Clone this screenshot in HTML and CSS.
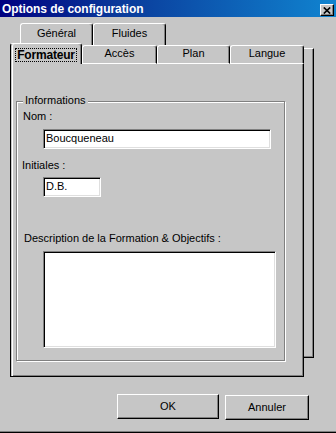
FILE: index.html
```html
<!DOCTYPE html>
<html lang="fr">
<head>
<meta charset="utf-8">
<title>Options de configuration</title>
<link rel="stylesheet" href="styles.css">
</head>
<body>
<div class="window">
  <div class="titlebar">
    <span class="title">Options de configuration</span>
    <span class="close"><svg width="8" height="7" viewBox="0 0 8 7"><path d="M0.8 0.5 L7.2 6.5 M7.2 0.5 L0.8 6.5" stroke="#000" stroke-width="1.7" fill="none"/></svg></span>
  </div>
  <div class="client">
    <div class="tabctl">
      <div class="backlayer">
        <div class="tabrow backrow">
          <div class="tab backtab">Général</div>
          <div class="tab backtab">Fluides</div>
        </div>
        <div class="backpanel"></div>
      </div>
      <div class="frontlayer">
        <div class="tabrow frontrow">
          <div class="tab seltab"><span class="focus">Formateur</span></div>
          <div class="tab fronttab w75">Accès</div>
          <div class="tab fronttab w73">Plan</div>
          <div class="tab fronttab w74">Langue</div>
        </div>
        <div class="panel">
          <div class="group">
            <div class="legend">Informations</div>
            <div class="label lbl-nom">Nom :</div>
            <div class="edit edit-nom">Boucqueneau</div>
            <div class="label lbl-ini">Initiales :</div>
            <div class="edit edit-ini">D.B.</div>
            <div class="label lbl-desc">Description de la Formation &amp; Objectifs :</div>
            <div class="edit edit-desc"></div>
          </div>
        </div>
      </div>
    </div>
    <div class="buttons">
      <div class="btn btn-ok">OK</div>
      <div class="btn btn-cancel">Annuler</div>
    </div>
  </div>
</div>
</body>
</html>
```

FILE: styles.css
```css
html, body {
  margin: 0;
  padding: 0;
  background: #c6c6c6;
}

body {
  font-family: "Liberation Sans", Arial, sans-serif;
  font-size: 11px;
  line-height: 13px;
  color: #000;
}

.window {
  width: 336px;
  height: 433px;
  box-sizing: border-box;
  display: flex;
  flex-direction: column;
  background: #c6c6c6;
  border-bottom: 1px solid #000;
  box-shadow: inset 0 -1px 0 #808080;
  overflow: hidden;
}

.titlebar {
  height: 17px;
  flex: none;
  box-sizing: border-box;
  display: flex;
  justify-content: space-between;
  align-items: flex-start;
  padding: 0 2px;
  background: linear-gradient(to right, #000080 0%, #0a3a9a 35%, #1084d0 100%);
}

.title {
  color: #fff;
  font-weight: bold;
  font-size: 12px;
  line-height: 16px;
  padding-top: 1px;
  letter-spacing: -0.05px;
}

.close {
  width: 14px;
  height: 12px;
  margin-top: 4px;
  box-sizing: border-box;
  border: 1px solid;
  border-color: #fff #000 #000 #fff;
  box-shadow: inset -1px -1px 0 #808080;
  background: #c6c6c6;
  display: flex;
  align-items: center;
  justify-content: center;
}

.client {
  padding: 6px 0 0 10px;
}

.tabctl {
  display: grid;
  width: 304px;
}

.backlayer,
.frontlayer {
  grid-area: 1 / 1;
  display: flex;
  flex-direction: column;
}

.tabrow {
  display: flex;
  align-items: flex-end;
}

.tab {
  box-sizing: border-box;
  text-align: center;
  background: #c6c6c6;
  border-radius: 3px 3px 0 0;
}

.backrow {
  margin-left: 10px;
  height: 22px;
}

.backtab {
  width: 73px;
  height: 22px;
  padding-top: 3px;
  border-top: 1px solid #fff;
  border-left: 1px solid #fff;
  border-right: 1px solid #000;
  box-shadow: inset -1px 0 0 #808080;
}

.backpanel {
  margin: 3px 0 0 10px;
  width: 294px;
  height: 310px;
  box-sizing: border-box;
  background: #c6c6c6;
  border: 1px solid;
  border-color: #fff #000 #000 #fff;
  box-shadow: inset -1px -1px 0 #808080;
}

.frontlayer {
  margin-top: 20px;
  width: 294px;
}

.frontrow {
  height: 21px;
}

.fronttab {
  height: 19px;
  padding-top: 1px;
  border-top: 1px solid #fff;
  border-left: 1px solid #fff;
  border-right: 1px solid #000;
  border-bottom: 1px solid #fff;
  box-shadow: inset -1px 0 0 #808080;
}

.w75 { width: 75px; }
.w73 { width: 73px; }
.w74 { width: 74px; }

.seltab {
  width: 72px;
  height: 21px;
  padding-top: 4px;
  border-top: 1px solid #fff;
  border-left: 1px solid #000;
  border-right: 1px solid #000;
  box-shadow: inset 1px 0 0 #c6c6c6, inset 2px 0 0 #fff, inset -1px 0 0 #808080;
}

.focus {
  display: inline-block;
  font-weight: bold;
  font-size: 12px;
  line-height: 12px;
  letter-spacing: -0.2px;
  padding: 0 1px;
  border: 1px dotted #000;
}

.panel {
  height: 313px;
  box-sizing: border-box;
  background: #c6c6c6;
  border-left: 1px solid #000;
  border-right: 1px solid #000;
  border-bottom: 1px solid #000;
  box-shadow: inset 1px 0 0 #c6c6c6, inset 2px 0 0 #fff, inset -1px -1px 0 #808080;
  padding: 37px 0 0 5px;
}

.group {
  width: 269px;
  height: 260px;
  box-sizing: border-box;
  border: 1px solid #808080;
  box-shadow: inset 1px 1px 0 #fff, 1px 1px 0 #fff;
  display: flex;
  flex-direction: column;
  align-items: flex-start;
}

.legend {
  margin: -8px 0 0 6px;
  padding: 0 2px;
  background: #c6c6c6;
}

.lbl-nom { margin: 3px 0 0 6px; }
.lbl-ini { margin: 10px 0 0 5px; }
.lbl-desc { margin: 35px 0 0 7px; }

.edit {
  box-sizing: border-box;
  background: #fff;
  border: 1px solid;
  border-color: #808080 #fff #fff #808080;
  box-shadow: inset 1px 1px 0 #000, inset -1px -1px 0 #dfdfdf;
  padding: 2px 0 0 2px;
  margin-left: 26px;
}

.edit-nom {
  margin-top: 6px;
  width: 228px;
  height: 20px;
}

.edit-ini {
  margin-top: 5px;
  width: 58px;
  height: 20px;
}

.edit-desc {
  margin-top: 6px;
  width: 233px;
  height: 97px;
}

.buttons {
  display: flex;
  align-items: flex-start;
  gap: 6px;
  margin: 17px 0 0 107px;
}

.btn {
  box-sizing: border-box;
  height: 25px;
  border: 1px solid;
  border-color: #fff #000 #000 #fff;
  box-shadow: inset -1px -1px 0 #808080;
  display: flex;
  align-items: center;
  justify-content: center;
}

.btn-ok {
  width: 102px;
}

.btn-cancel {
  width: 84px;
  margin-top: 1px;
}
```
